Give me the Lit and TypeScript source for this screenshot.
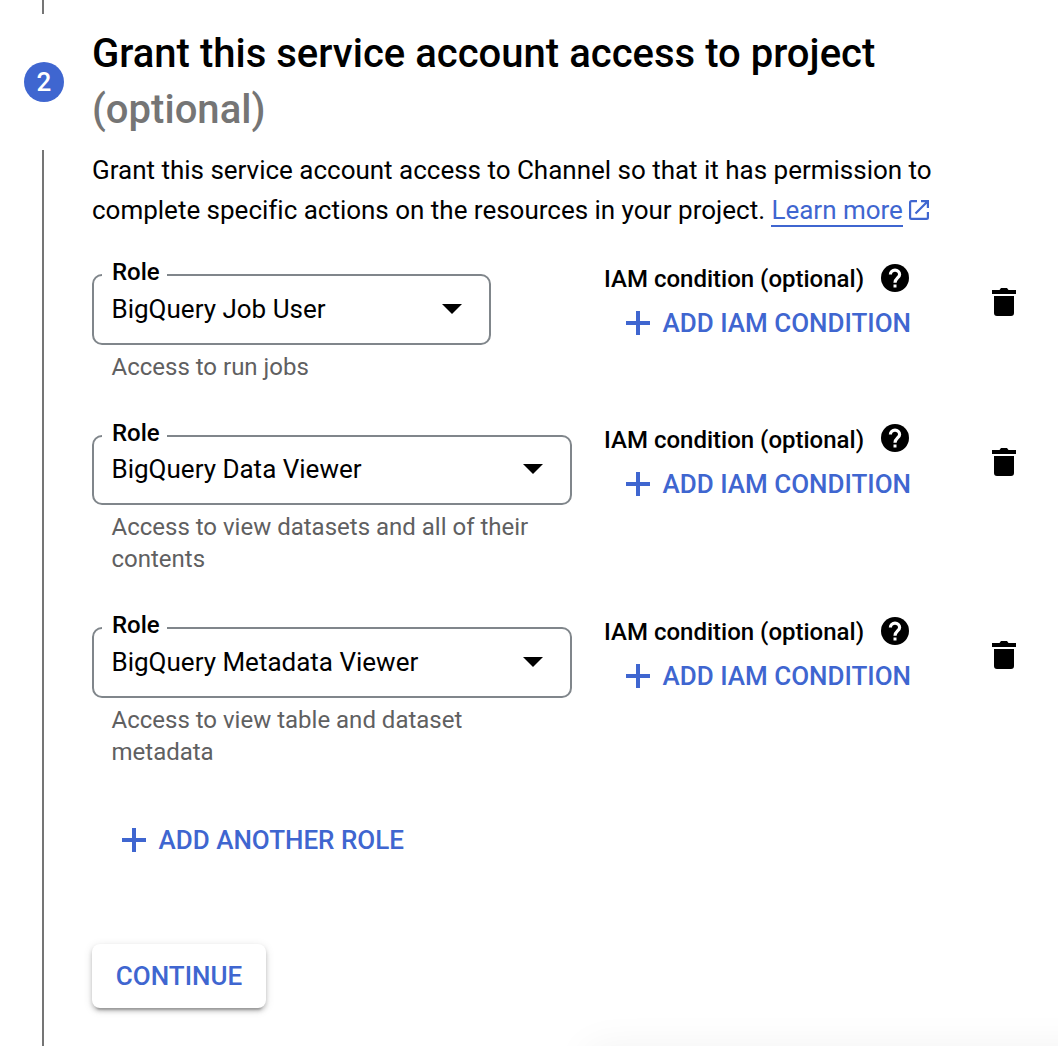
import { LitElement, html, css, nothing } from "lit";
import { customElement, property } from "lit/decorators.js";
import { classMap } from "lit/directives/class-map.js";

const plusIcon = html`<svg class="plus" width="24" height="24" viewBox="0 0 24 24" aria-hidden="true">
  <path d="M10 0h4v10h10v4H14v10h-4V14H0v-4h10z" fill="currentColor" />
</svg>`;

@customElement("role-row")
export class RoleRow extends LitElement {
  @property({ attribute: false }) value = "";
  @property({ attribute: false }) hint = "";
  @property({ type: Boolean }) narrow = false;
  @property({ type: Boolean }) short = false;

  static styles = css`
    :host {
      display: grid;
      grid-template-columns: 480px 356px 24px;
      column-gap: 32px;
      align-items: start;
    }
    .field {
      position: relative;
      box-sizing: border-box;
      display: flex;
      align-items: center;
      justify-content: space-between;
      width: 480px;
      height: 71px;
      padding: 0 27px 1px 17.5px;
      border: 2px solid #80868b;
      border-radius: 10px;
    }
    .field.narrow { width: 399px; }
    .field.short { height: 70px; padding-bottom: 2px; }
    .label {
      position: absolute;
      left: 8px;
      top: -20px;
      width: 55px;
      padding-left: 10px;
      background: #fff;
      font-size: 24px;
      line-height: 32px;
      font-weight: 500;
    }
    .value { font-size: 26px; line-height: 40px; }
    .hint {
      margin: 6px 0 0;
      padding: 0 20px 0 19.5px;
      font-size: 24px;
      line-height: 32px;
      color: #5f6061;
    }
    .condition { display: flex; flex-direction: column; margin-top: -12px; }
    .caption {
      display: flex;
      align-items: center;
      gap: 14px;
      height: 32px;
      font-size: 24px;
      font-weight: 500;
      white-space: nowrap;
    }
    .caption-text { padding-top: 2px; }
    .add {
      display: flex;
      align-items: center;
      gap: 12.5px;
      height: 40px;
      margin-top: 9px;
      padding-left: 22px;
      font-size: 26px;
      font-weight: 500;
      color: #3f66d0;
      white-space: nowrap;
    }
    .help, .plus, .trash, .arrow { display: block; flex: none; }
    .help.short { margin-bottom: 2px; }
    .trash { margin-top: 14px; }
    .trash.short { margin-top: 13px; }
  `;

  render() {
    return html`
      <div>
        <div class=${classMap({ field: true, narrow: this.narrow, short: this.short })}>
          <span class="label">Role</span>
          <span class="value">${this.value}</span>
          <svg class="arrow" width="20" height="10" viewBox="0 0 20 10"><path d="M0 0h20L10 10z" /></svg>
        </div>
        ${this.hint ? html`<p class="hint">${this.hint}</p>` : nothing}
      </div>
      <div class="condition">
        <div class="caption">
          <span class="caption-text">IAM condition (optional)</span>
          <svg class=${this.short ? "help short" : "help"} width="34" height="34" viewBox="0 0 34 34">
            <circle cx="17" cy="17" r="14" />
            <path d="M15.500 23.500h3v3h-3z" fill="#fff" />
            <path d="M12.400 13.400a4.600 4.300 0 1 1 9.200 0c0 3.300-4.600 4-4.600 8.300" fill="none" stroke="#fff" stroke-width="3.200" />
          </svg>
        </div>
        <div class="add">${plusIcon}<span>ADD IAM CONDITION</span></div>
      </div>
      <svg class=${this.short ? "trash short" : "trash"} width="24" height="28" viewBox="0 0 24 28">
        <path d="M0 2h7.500L9 0h6l1.500 2H24v4H0zM2 8h20v17a3 3 0 0 1-3 3H5a3 3 0 0 1-3-3z" />
      </svg>
    `;
  }
}

@customElement("app-root")
export class AppRoot extends LitElement {
  static styles = css`
    :host {
      position: relative;
      display: grid;
      grid-template-columns: 92px 1fr;
      box-sizing: border-box;
      width: 1058px;
      height: 1046px;
      overflow: hidden;
      background: #fff;
      color: #000;
      font-family: Roboto, "Liberation Sans", sans-serif;
    }
    .rail { display: flex; flex-direction: column; }
    .line { width: 2px; margin-left: 42px; background: #757575; }
    .line.top { height: 14px; }
    .line.rest { flex: 1; margin-top: 48px; }
    .step {
      display: flex;
      align-items: center;
      justify-content: center;
      width: 40px;
      height: 40px;
      margin: 48px 0 0 24px;
      border-radius: 50%;
      background: #3f66d0;
      color: #fff;
      font-size: 26px;
      font-weight: 500;
    }
    .content { padding-top: 26px; }
    h2 {
      margin: 0;
      font-size: 40px;
      line-height: 56px;
      font-weight: 500;
      letter-spacing: 0.02px;
    }
    .optional { display: block; color: #757575; }
    .intro {
      margin: 12px 0 0;
      font-size: 26px;
      line-height: 40px;
      letter-spacing: -0.01px;
      white-space: nowrap;
    }
    .link {
      display: inline-block;
      line-height: 30px;
      border-bottom: 2px solid #3f66d0;
      color: #3f66d0;
      text-decoration: none;
    }
    .external { margin-left: 6px; vertical-align: -1px; }
    .roles {
      display: flex;
      flex-direction: column;
      gap: 52px;
      margin-top: 44px;
    }
    .another {
      display: flex;
      align-items: center;
      gap: 12.5px;
      height: 40px;
      margin-top: 52px;
      padding-left: 30px;
      font-size: 26px;
      font-weight: 500;
      color: #3f66d0;
    }
    .continue {
      display: flex;
      align-items: center;
      justify-content: center;
      width: 174px;
      height: 64px;
      margin-top: 84px;
      border: 0;
      padding: 0;
      border-radius: 8px;
      background: #fff;
      color: #3f66d0;
      font: 500 26px Roboto, "Liberation Sans", sans-serif;
      box-shadow: 0 6px 2px -4px rgba(0, 0, 0, 0.2), 0 3px 4px rgba(0, 0, 0, 0.2), 0 2px 10px rgba(0, 0, 0, 0.12);
    }
    .toast-shadow {
      position: absolute;
      left: 588px;
      top: 1048px;
      width: 560px;
      height: 80px;
      box-shadow: 0 0 40px rgba(0, 0, 0, 0.06);
    }
  `;

  render() {
    return html`
      <div class="rail">
        <div class="line top"></div>
        <div class="step">2</div>
        <div class="line rest"></div>
      </div>
      <div class="content">
        <h2>Grant this service account access to project <span class="optional">(optional)</span></h2>
        <p class="intro">
          <span>Grant this service account access to Channel so that it has permission to</span><br />
          <span>complete specific actions on the resources in your project.</span>
          <a class="link">Learn more</a><svg class="external" width="20" height="20" viewBox="0 0 20 20">
            <path d="M8 1.100H2.500a1.400 1.400 0 0 0-1.400 1.400v15a1.400 1.400 0 0 0 1.400 1.400h15a1.400 1.400 0 0 0 1.400-1.400V12M12 1.100h6.900V8M18.500 1.500L6.500 13.500" fill="none" stroke="#3f66d0" stroke-width="2.200" />
          </svg>
        </p>
        <div class="roles">
          <role-row narrow .value=${"BigQuery Job User"} .hint=${"Access to run jobs"}></role-row>
          <role-row short .value=${"BigQuery Data Viewer"} .hint=${"Access to view datasets and all of their contents"}></role-row>
          <role-row .value=${"BigQuery Metadata Viewer"} .hint=${"Access to view table and dataset metadata"}></role-row>
        </div>
        <div class="another">${plusIcon}<span>ADD ANOTHER ROLE</span></div>
        <button class="continue">CONTINUE</button>
      </div>
      <div class="toast-shadow"></div>
    `;
  }
}
